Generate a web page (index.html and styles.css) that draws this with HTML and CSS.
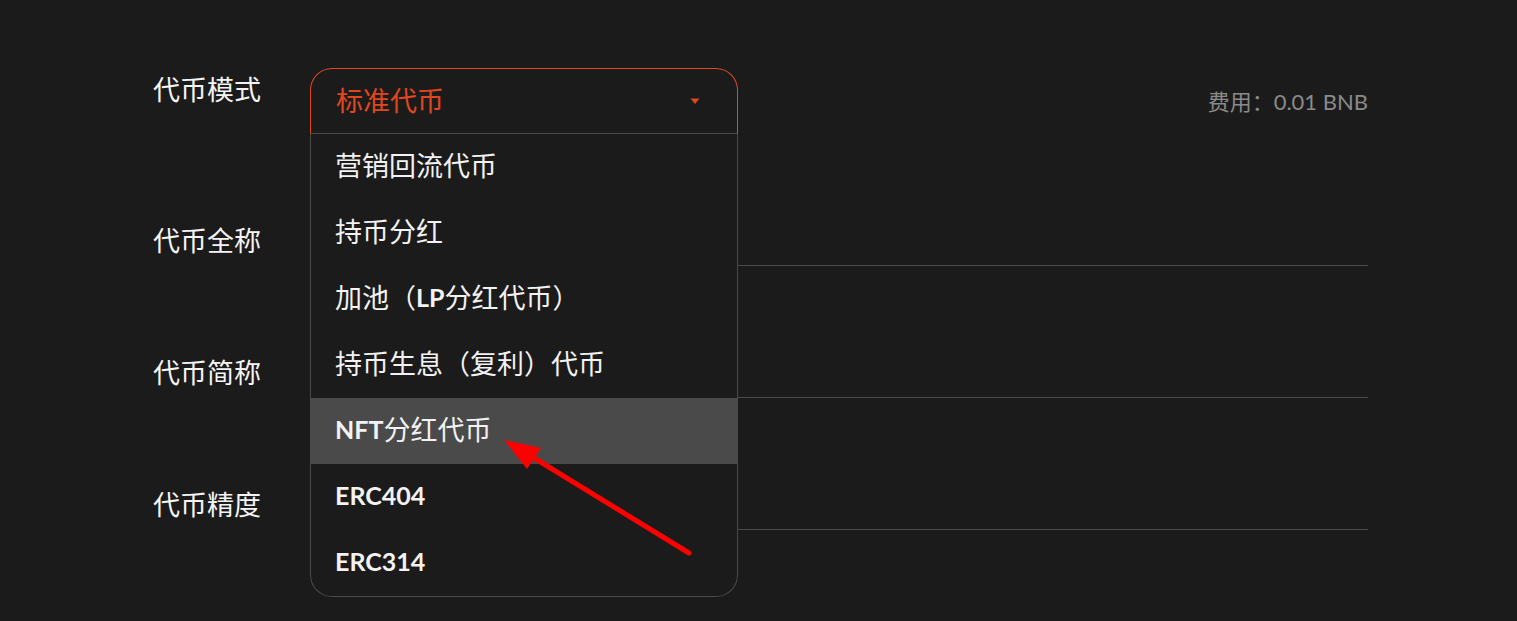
FILE: index.html
```html
<!DOCTYPE html>
<html lang="zh">
<head>
<meta charset="utf-8">
<title>代币模式</title>
<link rel="stylesheet" href="styles.css">
</head>
<body>
<div class="form">
  <div class="row row-first">
    <div class="label">代币模式</div>
    <div class="field field-select">
      <div class="select">
        <div class="select-head">
          <span>标准代币</span>
          <svg class="caret" width="10" height="7" viewBox="0 0 10 7"><path d="M0.5 0.5h9L5 6z" fill="#e0471f"/></svg>
        </div>
        <div class="dropdown">
          <div class="option">营销回流代币</div>
          <div class="option">持币分红</div>
          <div class="option">加池（<span class="en">LP</span>分红代币）</div>
          <div class="option">持币生息（复利）代币</div>
          <div class="option active"><span class="en">NFT</span>分红代币</div>
          <div class="option"><span class="en">ERC404</span></div>
          <div class="option"><span class="en">ERC314</span></div>
        </div>
      </div>
      <div class="fee">费用：<span class="fee-val">0.01 BNB</span></div>
    </div>
  </div>
  <div class="row">
    <div class="label">代币全称</div>
    <div class="field field-input"></div>
  </div>
  <div class="row">
    <div class="label">代币简称</div>
    <div class="field field-input"></div>
  </div>
  <div class="row">
    <div class="label">代币精度</div>
    <div class="field field-input"></div>
  </div>
</div>
<svg class="arrow" width="1517" height="621" viewBox="0 0 1517 621">
  <line x1="689" y1="553" x2="526" y2="453" stroke="#ff0000" stroke-width="5" stroke-linecap="round"/>
  <polygon points="504,440 541,448 527,469" fill="#ff0000"/>
</svg>
</body>
</html>
```
FILE: styles.css
```css
html, body {
  margin: 0;
  padding: 0;
  background: #1b1b1b;
  height: 100%;
  overflow: hidden;
}
body {
  font-family: "Noto Sans CJK SC", "Noto Sans", sans-serif;
  color: #ffffff;
  position: relative;
}
.form {
  padding: 68px 149px 0 153px;
}
.row {
  display: flex;
  align-items: flex-end;
  height: 132px;
}
.row-first {
  align-items: flex-start;
  height: 66px;
  position: relative;
  z-index: 2;
}
.label {
  flex: none;
  width: 157px;
  font-size: 27px;
  line-height: 46px;
  margin-bottom: 3px;
  color: #f4f4f4;
}
.row-first .label {
  margin-bottom: 0;
  line-height: 42px;
}
.field {
  flex: 1;
}
.field-input {
  height: 66px;
  border-bottom: 1px solid #4a4a4a;
  box-sizing: border-box;
}
.field-select {
  display: flex;
  justify-content: space-between;
  align-items: flex-start;
}
.select {
  position: relative;
  width: 428px;
}
.select-head {
  box-sizing: border-box;
  height: 66px;
  border: 1px solid #e0471f;
  border-bottom: 1px solid #4a4a4a;
  border-radius: 22px 22px 0 0;
  display: flex;
  align-items: center;
  justify-content: space-between;
  padding: 0 37px 4px 25px;
  font-size: 27px;
  color: #e0471f;
  background: #1b1b1b;
}
.caret {
  display: block;
  margin-top: 5px;
}
.dropdown {
  position: absolute;
  top: 100%;
  left: 0;
  right: 0;
  border: 1px solid #4a4a4a;
  border-top: none;
  border-radius: 0 0 22px 22px;
  background: #1b1b1b;
  overflow: hidden;
}
.option {
  box-sizing: border-box;
  height: 66px;
  display: flex;
  align-items: center;
  padding: 0 0 5px 24px;
  font-size: 27px;
  color: #f2f2f2;
}
.option.active {
  background: #4a4a4a;
}
.en {
  font-family: "Lato", "Noto Sans", sans-serif;
  font-weight: 700;
  font-size: 25px;
}
.fee {
  line-height: 64px;
  font-size: 22px;
  color: #8a8a8a;
}
.fee-val {
  font-family: "Lato", "Noto Sans", sans-serif;
}
.arrow {
  position: absolute;
  left: 0;
  top: 0;
  z-index: 5;
  pointer-events: none;
}
```
